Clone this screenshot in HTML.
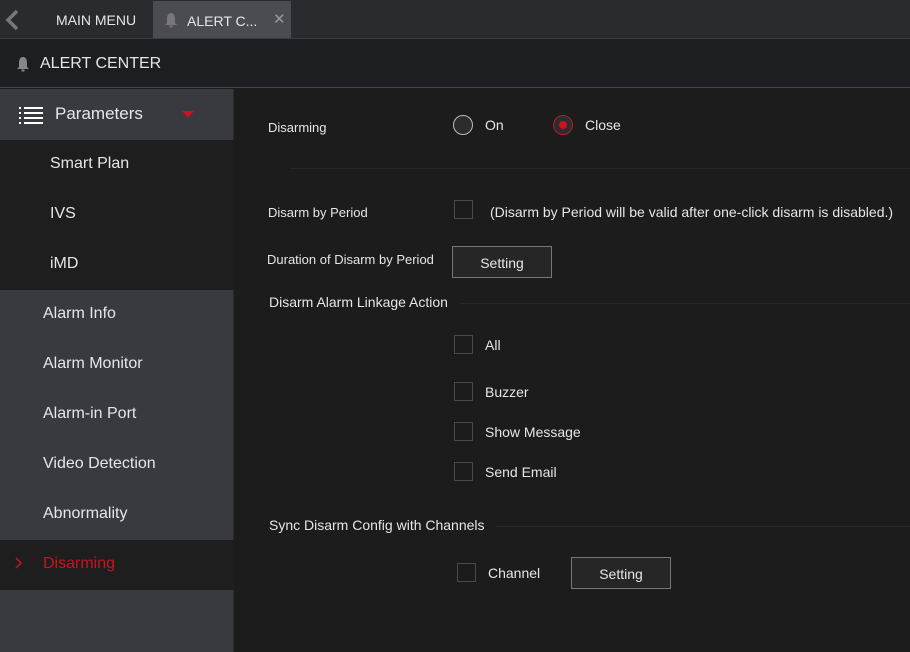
<!DOCTYPE html>
<html><head><style>
*{margin:0;padding:0;box-sizing:border-box}
body{width:910px;height:652px;background:#1c1c1c;font-family:"Liberation Sans",sans-serif;color:#e6e6e6;position:relative;overflow:hidden}
.a{position:absolute}
.top{left:0;top:0;width:910px;height:38px;background:#2a2b2f}
.tab{left:153px;top:1px;width:138px;height:37px;background:#4b4c51}
.hdr{left:0;top:38px;width:910px;height:50px;background:#1d1e21;border-top:1px solid #3a3b40;border-bottom:1px solid #44454a}
.side{left:0;top:89px;width:234px;height:563px;background:#393a40;border-right:1px solid #2a2a2a}
.sub{left:0;top:140px;width:234px;height:150px;background:#1e1e1f}
.sel{left:0;top:540px;width:234px;height:50px;background:#1e1e1f}
.t{font-size:16px;white-space:nowrap}
.s{font-size:13px;white-space:nowrap}
.cb{width:19px;height:19px;border:1px solid #4a4a4a;background:#1c1c1c}
.btn{border:1px solid #777;background:#262626;font-size:14px;text-align:center}
.line{height:1px;background:#26272c}
</style></head><body>
<div class="a top"></div>
<div class="a tab"></div>
<svg class="a" style="left:4px;top:9px" width="16" height="22"><path d="M13 2 L4 11 L13 20" stroke="#777" stroke-width="3.5" fill="none"/></svg>
<div class="a s" style="left:56px;top:12px;font-size:14px">MAIN MENU</div>
<svg class="a" style="left:164px;top:12px" width="14" height="16"><path d="M7 1C4 1 3 4 3 7V11L1 13H13L11 11V7C11 4 10 1 7 1Z" fill="#777"/><rect x="5.5" y="13.5" width="3" height="2" fill="#777"/></svg>
<div class="a s" style="left:187px;top:13px;font-size:14px">ALERT C...</div>
<div class="a" style="left:273px;top:10px;font-size:15px;color:#999">✕</div>
<div class="a hdr"></div>
<svg class="a" style="left:16px;top:56px" width="14" height="16"><path d="M7 1C4 1 3 4 3 7V11L1 13H13L11 11V7C11 4 10 1 7 1Z" fill="#888"/><rect x="5.5" y="13.5" width="3" height="2" fill="#888"/></svg>
<div class="a t" style="left:40px;top:55px">ALERT CENTER</div>
<div class="a side"></div>
<svg class="a" style="left:19px;top:106px" width="25" height="19" fill="#fff"><rect x="0" y="1" width="2" height="2"/><rect x="0" y="6" width="2" height="2"/><rect x="0" y="11" width="2" height="2"/><rect x="0" y="16" width="2" height="2"/><rect x="5" y="1" width="19" height="2"/><rect x="5" y="6" width="19" height="2"/><rect x="5" y="11" width="19" height="2"/><rect x="5" y="16" width="19" height="2"/></svg>
<div class="a t" style="left:55px;top:104px;font-size:17px">Parameters</div>
<svg class="a" style="left:182px;top:111px" width="12" height="8"><path d="M0 0H12L6 7Z" fill="#c8141e"/></svg>
<div class="a sub"></div>
<div class="a t" style="left:50px;top:155px">Smart Plan</div>
<div class="a t" style="left:50px;top:205px">IVS</div>
<div class="a t" style="left:50px;top:255px">iMD</div>
<div class="a t" style="left:43px;top:305px">Alarm Info</div>
<div class="a t" style="left:43px;top:355px">Alarm Monitor</div>
<div class="a t" style="left:43px;top:405px">Alarm-in Port</div>
<div class="a t" style="left:43px;top:455px">Video Detection</div>
<div class="a t" style="left:43px;top:505px">Abnormality</div>
<div class="a sel"></div>
<svg class="a" style="left:15px;top:557px" width="8" height="12"><path d="M1 1L6 6L1 11" stroke="#c8141e" stroke-width="1.5" fill="none"/></svg>
<div class="a t" style="left:43px;top:555px;color:#c8141e">Disarming</div>

<div class="a s" style="left:268px;top:120px">Disarming</div>
<div class="a" style="left:453px;top:115px;width:20px;height:20px;border-radius:50%;border:1.5px solid #bbb;background:#2b2c30"></div>
<div class="a s" style="left:485px;top:117px;font-size:14px">On</div>
<div class="a" style="left:553px;top:115px;width:20px;height:20px;border-radius:50%;border:1.5px solid #c8141e;background:#2b2c30"></div>
<div class="a" style="left:559px;top:121px;width:8px;height:8px;border-radius:50%;background:#c8141e"></div>
<div class="a s" style="left:585px;top:117px;font-size:14px">Close</div>
<div class="a line" style="left:290px;top:168px;width:620px"></div>

<div class="a s" style="left:268px;top:205px">Disarm by Period</div>
<div class="a cb" style="left:454px;top:200px"></div>
<div class="a s" style="left:490px;top:204px;font-size:14px">(Disarm by Period will be valid after one-click disarm is disabled.)</div>
<div class="a s" style="left:267px;top:252px">Duration of Disarm by Period</div>
<div class="a btn" style="left:452px;top:246px;width:100px;height:32px;line-height:32px">Setting</div>
<div class="a s" style="left:269px;top:294px;font-size:14px">Disarm Alarm Linkage Action</div>
<div class="a line" style="left:460px;top:303px;width:450px"></div>
<div class="a cb" style="left:454px;top:335px"></div><div class="a s" style="left:485px;top:337px;font-size:14px">All</div>
<div class="a cb" style="left:454px;top:382px"></div><div class="a s" style="left:485px;top:384px;font-size:14px">Buzzer</div>
<div class="a cb" style="left:454px;top:422px"></div><div class="a s" style="left:485px;top:424px;font-size:14px">Show Message</div>
<div class="a cb" style="left:454px;top:462px"></div><div class="a s" style="left:485px;top:464px;font-size:14px">Send Email</div>
<div class="a s" style="left:269px;top:517px;font-size:14px">Sync Disarm Config with Channels</div>
<div class="a line" style="left:495px;top:526px;width:415px"></div>
<div class="a cb" style="left:457px;top:563px"></div><div class="a s" style="left:488px;top:565px;font-size:14px">Channel</div>
<div class="a btn" style="left:571px;top:557px;width:100px;height:32px;line-height:32px">Setting</div>
</body></html>
